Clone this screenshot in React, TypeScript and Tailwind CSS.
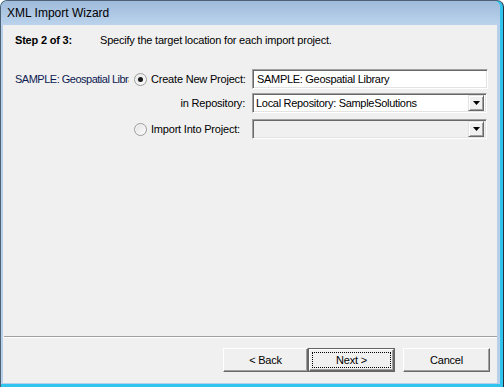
import React from "react";

const font = { fontFamily: '"Liberation Sans", Arial, sans-serif' };

function Radio({ checked }: { checked?: boolean }) {
  return (
    <div className="w-[13px] h-[13px] shrink-0 rounded-full border border-[#9a9b9b] bg-gradient-to-br from-[#e2e2e2] to-[#fdfdfd] flex items-center justify-center shadow-[inset_0_0_0_1px_#f6f6f6]">
      {checked && <div className="w-[5px] h-[5px] rounded-full bg-[#1a1a1a]" />}
    </div>
  );
}

function DropBtn() {
  return (
    <div className="w-[16px] h-[16px] shrink-0 bg-[#f0f0f0] border border-t-[#e3e3e3] border-l-[#e3e3e3] border-r-[#696969] border-b-[#696969] shadow-[inset_1px_1px_0_#ffffff,inset_-1px_-1px_0_#a0a0a0] flex items-center justify-center">
      <svg width="7" height="4" viewBox="0 0 7 4">
        <path d="M0 0H7L3.5 4Z" fill="#000" />
      </svg>
    </div>
  );
}

function Sunken({ children, className = "" }: { children?: React.ReactNode; className?: string }) {
  return (
    <div
      className={
        "h-[20px] shrink-0 border border-t-[#a0a0a0] border-l-[#a0a0a0] border-r-white border-b-white shadow-[inset_1px_1px_0_#696969,inset_-1px_-1px_0_#e3e3e3] flex items-center " +
        className
      }
    >
      {children}
    </div>
  );
}

function Button({ label, def, w }: { label: string; def?: boolean; w: string }) {
  if (def) {
    return (
      <div className={"h-[24px] border border-[#646464] " + w}>
        <div className="h-full w-full bg-[#f0f0f0] border border-t-white border-l-white border-r-[#696969] border-b-[#696969] shadow-[inset_-1px_-1px_0_#a0a0a0] flex items-center justify-center p-[2px]">
          <div className="w-full h-full border border-dotted border-black flex items-center justify-center text-[11px] text-black">
            {label}
          </div>
        </div>
      </div>
    );
  }
  return (
    <div
      className={
        "h-[24px] bg-[#f0f0f0] border border-t-white border-l-white border-r-[#696969] border-b-[#696969] shadow-[inset_-1px_-1px_0_#a0a0a0] flex items-center justify-center text-[11px] text-black " +
        w
      }
    >
      {label}
    </div>
  );
}

export default function App() {
  return (
    <div
      style={font}
      className="w-[504px] h-[387px] rounded-t-[7px] border-t border-l border-r border-[#4f6174] border-r-[#23313c] bg-[#31c4ee] flex flex-col overflow-hidden"
    >
      <div className="flex-1 mr-[3px] mb-[3px] bg-[#b7cfe8] flex flex-col rounded-t-[6px] overflow-hidden">
        <div className="h-[24px] bg-gradient-to-b from-[#9fbbdb] to-[#bbd3ec] flex items-center pl-[6px] text-[12px] text-black shrink-0">
          XML Import Wizard
        </div>
        <div className="flex-1 ml-[2px] mr-[3px] mb-px bg-[#f0f0f0] flex flex-col text-[11px] tracking-[-0.2px] text-black">
          <div className="flex-1 flex flex-col pl-[12px] pt-[8px]">
            <div className="flex h-[14px] items-center">
              <div className="w-[85px] font-bold">Step 2 of 3:</div>
              <div>Specify the target location for each import project.</div>
            </div>
            <div className="mt-[22px] flex items-center h-[20px]">
              <div className="w-[119px] shrink-0">
                <div className="w-[114px] overflow-hidden whitespace-nowrap tracking-[-0.5px] text-[#0d1a52]">SAMPLE: Geospatial Library</div>
              </div>
              <Radio checked />
              <div className="w-[105px] shrink-0 pl-[4px] whitespace-nowrap">Create New Project:</div>
              <Sunken className="w-[236px] bg-white pl-[4px] tracking-[-0.3px]">SAMPLE: Geospatial Library</Sunken>
            </div>
            <div className="mt-[4px] flex items-center h-[20px]">
              <div className="w-[132px] shrink-0" />
              <div className="w-[105px] shrink-0 pr-[7px] text-right whitespace-nowrap">in Repository:</div>
              <Sunken className="w-[235px] bg-white pl-[3px] pr-[2px] tracking-[-0.3px] justify-between">
                <span>Local Repository: SampleSolutions</span>
                <DropBtn />
              </Sunken>
            </div>
            <div className="mt-[6px] flex items-center h-[20px]">
              <div className="w-[119px] shrink-0" />
              <Radio />
              <div className="w-[105px] shrink-0 pl-[4px] whitespace-nowrap">Import Into Project:</div>
              <Sunken className="w-[235px] bg-[#f0f0f0] pr-[2px] justify-end">
                <DropBtn />
              </Sunken>
            </div>
          </div>
          <div className="ml-px h-[2px] border-t border-[#a0a0a0] border-b border-b-white" />
          <div className="h-[45px] flex items-start pt-[10px] pr-[7px] justify-end">
            <Button label="< Back" w="w-[85px]" />
            <Button label="Next >" def w="w-[87px]" />
            <div className="w-[8px]" />
            <Button label="Cancel" w="w-[87px]" />
          </div>
        </div>
      </div>
    </div>
  );
}
